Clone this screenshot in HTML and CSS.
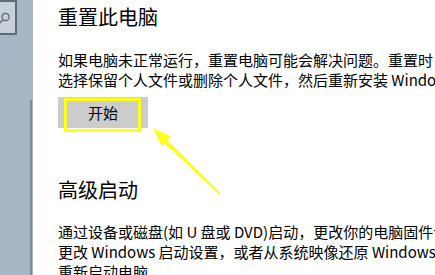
FILE: index.html
```html
<!DOCTYPE html>
<html lang="zh-CN">
<head>
<meta charset="utf-8">
<title>恢复</title>
<link rel="stylesheet" href="styles.css">
</head>
<body>
<div class="page">
  <aside class="sidebar">
    <div class="search">
      <svg class="search-icon" width="12" height="14" viewBox="0 0 12 14">
        <circle cx="6.5" cy="5" r="3.6" fill="none" stroke="#5b6572" stroke-width="1.2"/>
        <line x1="4" y1="7.6" x2="0" y2="11.8" stroke="#5b6572" stroke-width="1.3"/>
      </svg>
    </div>
    <div class="rail"></div>
  </aside>
  <main class="content">
    <section class="section">
      <h2 class="title">重置此电脑</h2>
      <p class="desc">如果电脑未正常运行，重置电脑可能会解决问题。重置时，你可以<br>选择保留个人文件或删除个人文件，然后重新安装 Windows。</p>
      <button class="btn">开始</button>
    </section>
    <section class="section second">
      <h2 class="title">高级启动</h2>
      <p class="desc">通过设备或磁盘(如 U 盘或 DVD)启动，更改你的电脑固件设置，<br>更改 Windows 启动设置，或者从系统映像还原 Windows。这将<br>重新启动电脑。</p>
    </section>
  </main>
  <svg class="annot" width="435" height="275" viewBox="0 0 435 275">
    <rect x="65.5" y="99.5" width="74" height="31" fill="none" stroke="#ffff1a" stroke-width="3"/>
    <polygon points="219,194.5 220.5,193 161,134 158,137" fill="#ffff1a"/>
    <polygon points="153,128 171,136.5 161.5,146" fill="#ffff1a"/>
  </svg>
</div>
</body>
</html>
```

FILE: styles.css
```css
html, body {
  margin: 0;
  padding: 0;
  background: #ffffff;
}
.page {
  position: relative;
  width: 435px;
  height: 275px;
  overflow: hidden;
  display: flex;
  font-family: "Noto Sans CJK SC", "Noto Sans", sans-serif;
  color: #000;
}
.sidebar {
  width: 33px;
  flex: none;
  background: #a9b6c5;
  position: relative;
}
.search {
  width: 15px;
  height: 31px;
  border: 2px solid #5f6b78;
  border-left: none;
  background: #c8d0d9;
  position: relative;
  overflow: hidden;
}
.search-icon {
  position: absolute;
  left: -1px;
  top: 10px;
}
.rail {
  position: absolute;
  left: 30px;
  top: 100px;
  bottom: 0;
  width: 2px;
  background: #7f8b98;
}
.content {
  flex: 1;
  padding-left: 25px;
  padding-top: 3px;
  white-space: nowrap;
  overflow: hidden;
}
.section {
  display: flex;
  flex-direction: column;
  align-items: flex-start;
}
.second {
  margin-top: 48px;
}
.title {
  margin: 0;
  font-size: 20px;
  font-weight: normal;
  line-height: 28px;
  height: 28px;
}
.desc {
  margin: 19px 0 0 0;
  font-size: 15px;
  line-height: 20px;
}
.second .desc {
  margin-top: 18px;
}
.btn {
  margin-top: 7px;
  width: 90px;
  height: 31px;
  border: none;
  padding: 0;
  background: #cccccc;
  font-family: "Noto Sans CJK SC", "Noto Sans", sans-serif;
  font-size: 15px;
  color: #000;
}
.annot {
  position: absolute;
  left: 0;
  top: 0;
  pointer-events: none;
}
```
